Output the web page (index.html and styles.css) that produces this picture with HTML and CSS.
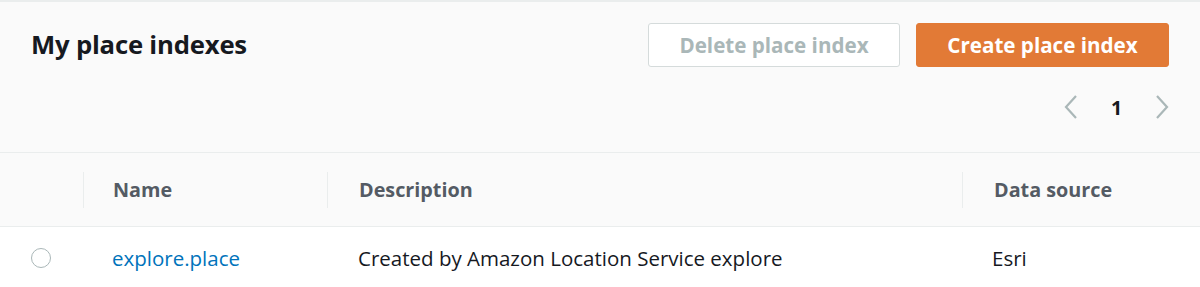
FILE: index.html
```html
<!DOCTYPE html>
<html lang="en">
<head>
<meta charset="utf-8">
<title>My place indexes</title>
<link rel="stylesheet" href="styles.css">
</head>
<body>
<div class="panel">
  <div class="panel-header">
    <div class="header-top">
      <h2 class="title">My place indexes</h2>
      <div class="actions">
        <button class="btn btn-disabled" type="button">Delete place index</button>
        <button class="btn btn-primary" type="button">Create place index</button>
      </div>
    </div>
    <div class="pagination">
      <span class="page-arrow">
        <svg width="14" height="24" viewBox="0 0 14 24"><polyline points="12,1 2,12 12,23" fill="none" stroke="#aab7b8" stroke-width="2.2"/></svg>
      </span>
      <span class="page-num">1</span>
      <span class="page-arrow">
        <svg width="14" height="24" viewBox="0 0 14 24"><polyline points="2,1 12,12 2,23" fill="none" stroke="#aab7b8" stroke-width="2.2"/></svg>
      </span>
    </div>
  </div>
  <div class="table">
    <div class="thead">
      <div class="th th-select"></div>
      <div class="th"><div class="th-inner th-name">Name</div></div>
      <div class="th"><div class="th-inner">Description</div></div>
      <div class="th"><div class="th-inner">Data source</div></div>
    </div>
    <div class="tr">
      <div class="td td-select"><span class="radio"></span></div>
      <div class="td td-name"><a class="link" href="#">explore.place</a></div>
      <div class="td td-desc">Created by Amazon Location Service explore</div>
      <div class="td td-src">Esri</div>
    </div>
  </div>
</div>
</body>
</html>
```

FILE: styles.css
```css
* { box-sizing: border-box; }
html, body { margin: 0; padding: 0; }
body {
  background: #fafafa;
  font-family: "Open Sans", "Liberation Sans", sans-serif;
  color: #16191f;
  height: 287px;
  overflow: hidden;
}
.panel {
  border-top: 2px solid #eaeded;
  background: #fafafa;
}
.panel-header {
  padding: 21px 31px 0 31px;
  height: 151px;
  border-bottom: 1px solid #eaeded;
}
.header-top {
  display: flex;
  align-items: center;
  justify-content: space-between;
  height: 44px;
}
.title {
  margin: 0;
  font-size: 25.7px;
  font-weight: 700;
  color: #16191f;
  line-height: 1;
  letter-spacing: -0.2px;
}
.actions {
  display: flex;
  gap: 16px;
}
.btn {
  height: 44px;
  border-radius: 3px;
  font-family: inherit;
  font-size: 20.6px;
  font-weight: 700;
  padding: 0;
  width: 253px;
  cursor: pointer;
}
.btn-disabled {
  background: #ffffff;
  border: 1px solid #d5dbdb;
  color: #aab7b8;
  width: 252px;
}
.btn-primary {
  background: #e27a36;
  border: 1px solid #e27a36;
  color: #ffffff;
}
.pagination {
  display: flex;
  align-items: center;
  justify-content: flex-end;
  margin-top: 28px;
  height: 24px;
}
.page-arrow {
  display: flex;
  width: 14px;
  height: 24px;
}
.page-num {
  font-size: 19.5px;
  font-weight: 700;
  color: #16191f;
  width: 77px;
  text-align: center;
}
.table { background: #ffffff; }
.thead, .tr {
  display: grid;
  grid-template-columns: 83px 244px 635px 1fr;
}
.thead {
  height: 74px;
  background: #fafafa;
  border-bottom: 1px solid #eaeded;
}
.th {
  display: flex;
  align-items: center;
}
.th-inner {
  height: 36px;
  border-left: 1px solid #eaeded;
  padding-left: 31px;
  display: flex;
  align-items: center;
  font-size: 19.8px;
  font-weight: 700;
  color: #545b64;
  width: 100%;
}
.th-name { padding-left: 29px; }
.tr {
  height: 62px;
  background: #ffffff;
}
.td {
  display: flex;
  align-items: center;
  font-size: 20.5px;
  color: #16191f;
}
.td-select { padding-left: 31px; }
.td-name { padding-left: 29px; }
.td-desc { padding-left: 31px; }
.td-src { padding-left: 30px; }
.radio {
  display: block;
  width: 20px;
  height: 20px;
  border-radius: 50%;
  border: 1.5px solid #aab7b8;
  background: #ffffff;
}
.link {
  color: #0073bb;
  text-decoration: none;
}
```
